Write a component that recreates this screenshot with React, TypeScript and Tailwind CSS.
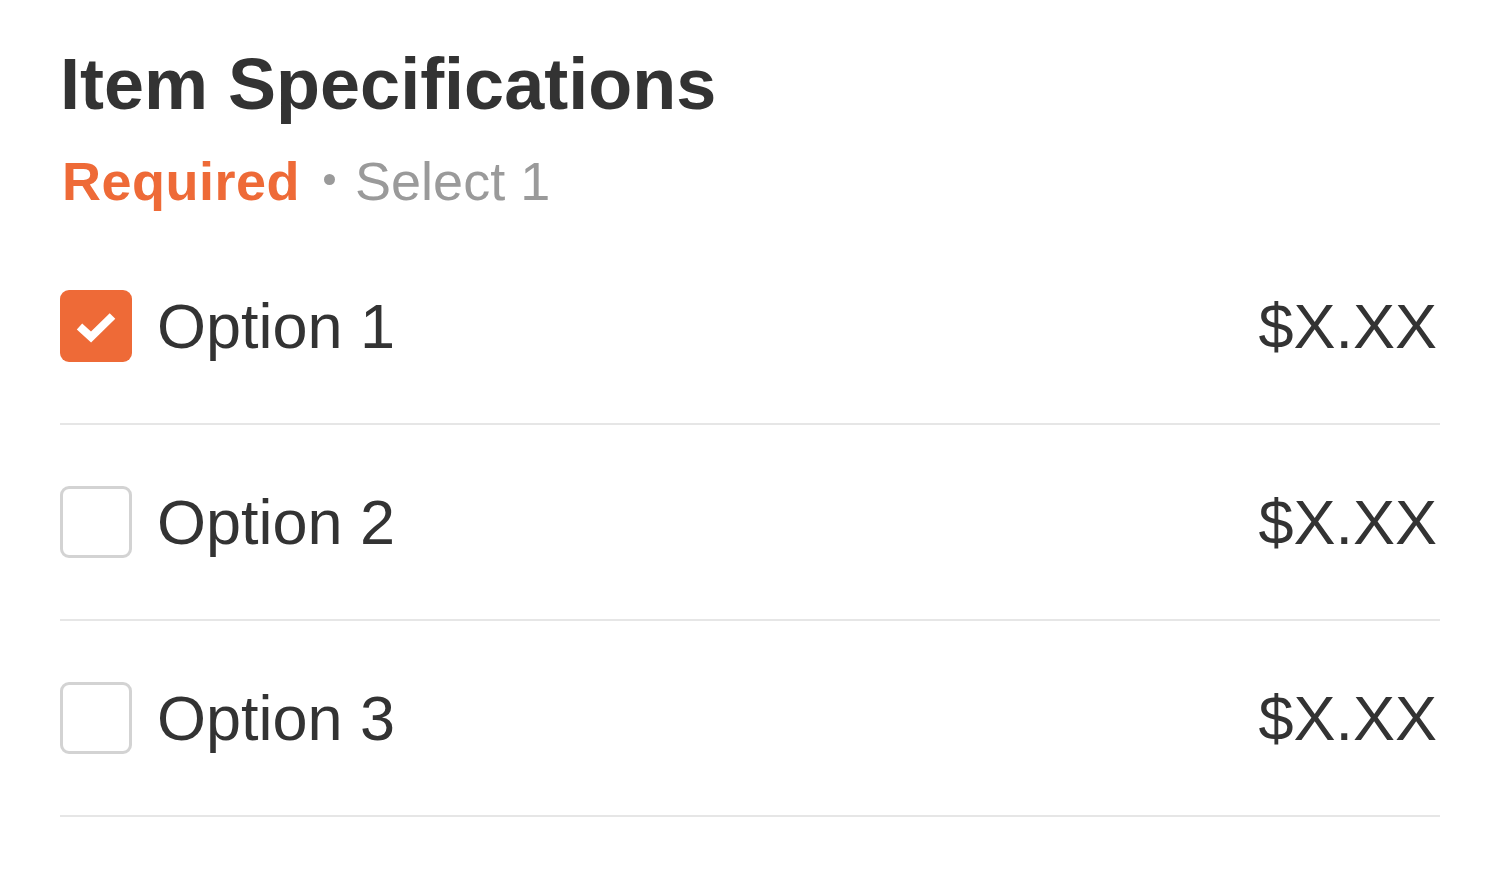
import React, { useState } from "react";

interface OptionRowProps {
  label: string;
  price: string;
  checked: boolean;
  onToggle: () => void;
}

const OptionRow: React.FC<OptionRowProps> = ({ label, price, checked, onToggle }) => {
  return (
    <div
      onClick={onToggle}
      className="flex items-center justify-between pt-[61px] pb-[61px] border-b-2 border-[#e6e6e6] cursor-pointer"
    >
      <div className="flex items-center">
        {checked ? (
          <div className="w-[72px] h-[72px] rounded-[9px] bg-[#ee6a37]">
            <svg width="72" height="72" viewBox="0 0 72 72" fill="none">
              <path d="M19.5 36.5l11.5 10.5 21.5-21" stroke="white" strokeWidth="8" />
            </svg>
          </div>
        ) : (
          <div className="w-[72px] h-[72px] rounded-[9px] border-[3px] border-[#d3d3d3] bg-white" />
        )}
        <span className="ml-[25px] text-[63px] leading-[72px] text-[#333333]">{label}</span>
      </div>
      <span className="mr-[3px] text-[63px] leading-[72px] text-[#333333]">{price}</span>
    </div>
  );
};

export default function App() {
  const [selected, setSelected] = useState(0);
  const options = ["Option 1", "Option 2", "Option 3"];

  return (
    <div className="min-h-screen bg-white px-[60px] pt-[48px] font-['Liberation_Sans',Arial,sans-serif]">
      <h1 className="text-[72px] leading-[72px] font-bold text-[#333333]">Item Specifications</h1>
      <div className="mt-[35px] text-[54px] leading-[52px] flex items-center">
        <span className="ml-[2px] font-bold text-[#ee6a37] tracking-[0.5px]">Required</span>
        <span className="ml-[24px] mr-[20px] mb-[4px] w-[11px] h-[11px] rounded-full bg-[#9a9a9a]" />
        <span className="text-[#9a9a9a]">Select 1</span>
      </div>
      <div className="mt-[22px]">
        {options.map((o, i) => (
          <OptionRow
            key={o}
            label={o}
            price="$X.XX"
            checked={selected === i}
            onToggle={() => setSelected(i)}
          />
        ))}
      </div>
    </div>
  );
}
